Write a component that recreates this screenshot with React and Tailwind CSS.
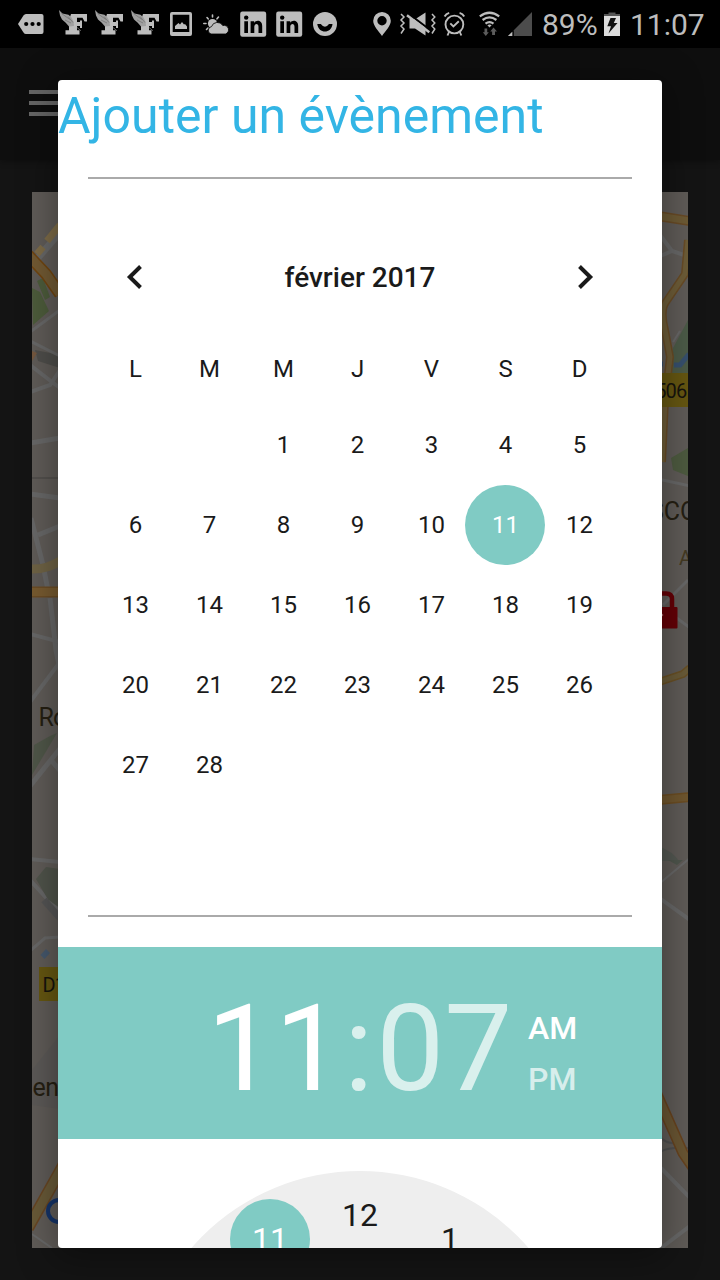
import React from "react";

function Icon({ box, w, h, className = "", children }) {
  return (
    <svg viewBox={box} width={w} height={h} className={"shrink-0 " + className}>
      {children}
    </svg>
  );
}

const GREY = "#bdbdbd";

function MessageIcon({ className }) {
  return (
    <Icon box="17 12 28 24" w={28} h={24} className={className}>
      <path d="M18 24 L23.5 15.5 Q24.5 14 26 14 H41.5 Q43.5 14 43.5 16 V32 Q43.5 34 41.5 34 H26 Q24.5 34 23.5 32.5 Z" fill={GREY} />
      <circle cx="26.2" cy="24" r="2.1" />
      <circle cx="32.5" cy="24" r="2.1" />
      <circle cx="38.7" cy="24" r="2.1" />
    </Icon>
  );
}

function WingedFIcon({ className }) {
  return (
    <Icon box="58 9 30 28" w={30} h={28} className={className}>
      <path d="M71 14 H87 V21.5 H84.5 L82.5 17.8 H77 V22 H80 V20.5 H82 V28 H80 V26 H77 V30.3 H79.5 V34.5 H65.5 V30.3 H69 V20 Z" fill={GREY} />
      <path d="M59 10 L62.5 13.5 L68.5 14.8 L71.5 17.5 L73.5 21.5 L74 26 L69 26.5 L65.5 22.5 L62 19.5 L60 15.5 Z" fill="#a0a0a0" />
      <path d="M61.5 13.5 L70 19.5 M65 20 L71 23 M68 16.5 L73 22.5" stroke="#6e6e6e" strokeWidth="0.7" fill="none" />
      <path d="M77 27.5 L81 30.8" stroke="#777" strokeWidth="0.8" />
    </Icon>
  );
}

function ImageIcon({ className }) {
  return (
    <Icon box="169 11 24 26" w={24} h={26} className={className}>
      <path fillRule="evenodd" d="M172 12 H190 Q192 12 192 14 V34 Q192 36 190 36 H172 Q170 36 170 34 V14 Q170 12 172 12 Z M172.7 14.7 V32 H189.3 V14.7 Z" fill={GREY} />
      <path d="M175 29 V26 L178.5 23 L180 24.5 L182 22 L184 24.5 L185 24 L187 26.5 V29 Z" fill={GREY} />
    </Icon>
  );
}

function WeatherIcon({ className }) {
  return (
    <Icon box="203 13 27 22" w={27} h={22} className={className}>
      <circle cx="212.5" cy="23.5" r="4.6" fill={GREY} />
      <path d="M212.5 15 V17 M207 17.5 L208.3 19 M218.5 17 L217 18.8 M203.8 23.5 H206 M206.5 29.5 L208 28" stroke={GREY} strokeWidth="1.6" strokeLinecap="round" />
      <path d="M211 34 A3.8 3.8 0 0 1 211.5 26.6 A6.2 6.2 0 0 1 222.8 25.6 A4.3 4.3 0 1 1 225.5 34 Z" fill={GREY} stroke="#000" strokeWidth="0.8" />
    </Icon>
  );
}

function LinkedInIcon({ className }) {
  return (
    <Icon box="240 11 27 27" w={27} h={27} className={className}>
      <rect x="240.2" y="11.5" width="26" height="25.3" rx="2.2" fill={GREY} />
      <circle cx="246.2" cy="17.6" r="2.2" />
      <path d="M244.3 21.2 H248 V33 H244.3 Z M250.6 21.2 H254.2 V22.8 C256.4 19.5 262.2 20.2 262.2 26 V33 H258.5 V26.8 C258.5 22.9 254.3 23.4 254.3 26.8 V33 H250.6 Z" />
    </Icon>
  );
}

function SmileIcon({ className }) {
  return (
    <Icon box="313 12 24 24" w={24} h={24} className={className}>
      <circle cx="325" cy="24" r="12" fill={GREY} />
      <path d="M317.3 24 H320.8 Q325 29.5 329 24 H332.5 C331.5 34 318.4 34 317.3 24 Z" />
    </Icon>
  );
}

function PinIcon({ className }) {
  return (
    <Icon box="373 12 18 24" w={18} h={24} className={className}>
      <path fillRule="evenodd" d="M382 12 A8.8 8.8 0 0 1 390.8 20.8 C390.8 26 385.5 31 382 36 C378.5 31 373.2 26 373.2 20.8 A8.8 8.8 0 0 1 382 12 Z M382 16 A4.7 4.7 0 1 0 382 25.4 A4.7 4.7 0 1 0 382 16 Z" fill={GREY} />
    </Icon>
  );
}

function MuteVibrateIcon({ className }) {
  return (
    <Icon box="399 11 38 26" w={38} h={26} className={className}>
      <path d="M401 14 L404 17 L401 20 L404 23 L401 26 L404 29 L401 33.5 M432 14 L434.8 17 L432 20 L434.8 23 L432 26 L434.8 29 L432 33.5" stroke={GREY} strokeWidth="1.5" fill="none" />
      <path d="M409.5 19 H415.5 L425.5 12.5 V35.5 L415 28.5 H409.5 Z" fill={GREY} />
      <path d="M408.5 13.6 L431.5 31" stroke="#000" strokeWidth="2" />
      <path d="M407 15.3 L429.3 32.2" stroke={GREY} strokeWidth="2.4" />
    </Icon>
  );
}

function AlarmIcon({ className }) {
  return (
    <Icon box="443 11 24 26" w={24} h={26} className={className}>
      <g fill="none" stroke={GREY} strokeWidth="1.9">
        <circle cx="454.4" cy="24.5" r="8.9" />
        <path d="M444.6 16.5 Q446 13.6 449.2 12.8 M464.2 16.5 Q462.8 13.6 459.6 12.8 M449 32 L447.5 35.5 M459.8 32 L461.3 35.5 M450.3 23.3 L453.4 26.5 L458.8 21.3" />
      </g>
    </Icon>
  );
}

function WifiIcon({ className }) {
  return (
    <Icon box="479 11 21 26" w={21} h={26} className={className}>
      <g fill="none" stroke={GREY} strokeWidth="2.2">
        <path d="M479.8 16.3 Q489.5 9.2 499.2 16.3 M482.6 20 Q489.5 14.8 496.4 20 M485.5 23.7 Q489.5 20.4 493.5 23.7" />
      </g>
      <path d="M487.4 25.3 Q489.5 23.7 491.6 25.3 L489.5 27.6 Z" fill={GREY} />
      <path d="M485.8 36 L482.8 32.3 H484.5 V28.5 H487.2 V32.3 H488.8 Z M493.5 27.5 L497 31.5 H495 V35 H492.1 V31.5 H490.3 Z" fill="#5c5c5c" />
    </Icon>
  );
}

function SignalIcon({ className }) {
  return (
    <Icon box="508 12 24 24" w={24} h={24} className={className}>
      <path d="M532 12 V36 H508 Z" fill="#4c4c4c" />
      <path d="M513 30.5 V36" stroke="#000" strokeWidth="1.6" />
      <path d="M512.3 31.7 V36 H508 Z" fill={GREY} />
    </Icon>
  );
}

function BatteryIcon({ className }) {
  return (
    <Icon box="604 12 16 24" w={16} h={24} className={className}>
      <path d="M604 14 H608.5 V12.5 H615.5 V14 H620 V17 H604 Z" fill="#555" />
      <path d="M604 16 H620 V36 H604 Z" fill="#dcdcdc" />
      <path d="M610.5 18 H616 L613.8 23 H617.5 L608.5 33.5 L611 26.3 H607.3 Z" fill="#111" />
    </Icon>
  );
}

function StatusBar() {
  return (
    <header className="flex h-12 shrink-0 items-center bg-black text-[30px] leading-none text-[#bdbdbd]">
      <MessageIcon className="ml-[17px]" />
      <WingedFIcon className="-mt-0.5 ml-[13px]" />
      <WingedFIcon className="-mt-0.5 ml-[6px]" />
      <WingedFIcon className="-mt-0.5 ml-[6px]" />
      <ImageIcon className="ml-[9px]" />
      <WeatherIcon className="ml-[10px]" />
      <LinkedInIcon className="ml-[10px]" />
      <LinkedInIcon className="ml-[9px]" />
      <SmileIcon className="ml-[10px]" />
      <PinIcon className="ml-[36px]" />
      <MuteVibrateIcon className="ml-[8px]" />
      <AlarmIcon className="ml-[6px]" />
      <WifiIcon className="ml-[12px]" />
      <SignalIcon className="ml-[8px]" />
      <span className="ml-[10px] w-[62px] pt-px whitespace-nowrap">89%</span>
      <BatteryIcon />
      <span className="ml-[10px] pt-px whitespace-nowrap">11:07</span>
    </header>
  );
}

function Road({ d, color = "#69655a", edge, w = 6 }) {
  return (
    <>
      {edge && <path d={d} stroke={edge} strokeWidth={w + 3} fill="none" />}
      <path d={d} stroke={color} strokeWidth={w} fill="none" />
    </>
  );
}

function CityMap() {
  const street = "#686868";
  return (
    <svg viewBox="32 192 656 1056" className="block h-full w-full" fontFamily="Roboto, sans-serif">
      <rect x="32" y="192" width="656" height="1056" fill="#605c58" />

      <path d="M32 288 L40 292 L49 311 L33 325 Z" fill="#4d5c3b" />
      <path d="M37 281 L43 278 L50 297 L45 300 Z" fill="#4d5c3b" />
      <path d="M35 350 L60 355 V368 L38 361 Z" fill="#4f4e4b" />
      <path d="M32 351 L37 353 L32 361 Z" fill="#75583f" />
      <Road d="M30 267 L62 230" color={street} w={7} />
      <path d="M37 254 L43 247 M47 241 L60 225" stroke="#7e6c48" strokeWidth="7" />
      <Road d="M28 255 L46 274 L60 294" color="#725a33" edge="#704510" w={9} />
      <Road d="M30 332 L60 310" color={street} w={3} />
      <Road d="M30 341 L60 356" color={street} w={3} />
      <Road d="M30 365 L52 382 L60 388 M30 392 L50 385 L60 370" color={street} w={4} />
      <Road d="M30 443 L60 438" color={street} w={5} />
      <Road d="M30 478 H60" color="#53504d" w={2} />
      <Road d="M30 494 L60 498" color={street} w={5} />
      <Road d="M31 518 L43 565 L49 595 M50 598 L56 650 L60 670 M38 535 L60 526" color={street} w={5} />
      <Road d="M30 569 Q46 570 60 561" color="#6f6345" w={9} />
      <Road d="M30 592 H60" color="#785b30" edge="#6c4d25" w={8} />
      <Road d="M30 634 L60 642 M30 702 L60 662" color={street} w={4} />
      <path d="M34 745 L50 736 L57 733 L32 775 Z" fill="#505749" />
      <Road d="M30 786 L62 746 M51 760 L62 773" color={street} w={5} />
      <Road d="M30 859 L60 862 M30 880 L60 913" color={street} w={4} />
      <path d="M36 879 L46 867 L60 869 V908 L50 903 Z" fill="#50544b" />
      <path d="M46 900 L60 910 M30 951 L45 938 L60 937" stroke={street} strokeWidth="3" fill="none" />
      <path d="M44 900 L60 918" stroke="#555" strokeWidth="7" />
      <path d="M40.5 955 L46 949 L50 953 L44.5 959 Z" fill="#46586d" />
      <path d="M32 1070 L60 1035 V1109 L32 1105 Z" fill="#5c5957" />
      <Road d="M28 1228 L64 1164" color="#695a38" edge="#684623" w={9} />
      <path d="M32 1234 L52 1248" stroke={street} strokeWidth="2" />
      <rect x="39" y="967" width="30" height="34" fill="#665711" />
      <text x="42.5" y="992" fontSize="20" letterSpacing="-0.8" fill="#16140d">D1</text>
      <text x="38.5" y="725.5" fontSize="25" letterSpacing="-0.8" fill="#251f12">Ro</text>
      <text x="32.5" y="1096" fontSize="25" letterSpacing="-0.5" fill="#251f12">en</text>
      <circle cx="59" cy="1211" r="11" fill="none" stroke="#153469" strokeWidth="4" />

      <Road d="M658 216 L690 221" color="#6e5b35" edge="#694b26" w={7} />
      <Road d="M660 235 L672 251 L690 257 M672 251 L658 257" color={street} w={4} />
      <path d="M688 320 V374 H668 L673 348 Z" fill="#4c5b48" />
      <path d="M673 342 L680 331" stroke={street} strokeWidth="2" />
      <path d="M658 364 L663 364 M674 365 H680 L689 354" stroke="#37506e" strokeWidth="5" fill="none" />
      <Road d="M688 240 L685 274 L666 302 Q660 310 665 330 L670 357 L665 400 L662 462" color="#6e5d38" edge="#694c26" w={5} />
      <rect x="650" y="373" width="38" height="34" fill="#665711" />
      <text x="686.5" y="398" textAnchor="end" fontSize="20" letterSpacing="-0.8" fill="#16140d">506</text>
      <path d="M671 458 L688 448 V476 L673 470 Z" fill="#4e5b40" />
      <path d="M658 479 L690 486 M688 580 L663 605 M674 616 L689 627" stroke={street} strokeWidth="3" fill="none" />
      <text x="649" y="519.5" fontSize="25" fill="#251f12">SCO</text>
      <text x="679" y="565" fontSize="20" fill="#443a22">A</text>
      <path d="M652 610 V599 Q652 593.5 658 593.5 H666 Q672 593.5 672 599 V610" fill="none" stroke="#650006" strokeWidth="4.5" />
      <rect x="645" y="607" width="32.5" height="21.5" rx="1" fill="#650006" />
      <circle cx="662" cy="615" r="1.3" fill="#a05a5c" />
      <Road d="M656 683 L683 674 L690 668" color="#6a5b38" edge="#695025" w={5} />
      <Road d="M658 800 L690 797" color="#70572f" edge="#6c4d22" w={7} />
      <path d="M660 847 Q672 851 679 861 L660 861 Z" fill="#545852" />
      <path d="M668 860 H683 L677 865 Z" fill="#4f564d" />
      <path d="M659 884 L690 858" stroke={street} strokeWidth="2" />
      <Road d="M658 897 L690 920 M661 1168 L690 1198 M661 1248 L690 1226" color={street} w={4} />
      <path d="M660 1137 Q669 1146 680 1142 M660 1152 Q668 1147 688 1148" stroke="#505050" strokeWidth="2" fill="none" />
      <Road d="M656 1092 L683 1153 L694 1169" color="#6a5633" edge="#68431e" w={8} />
    </svg>
  );
}

const WEEKDAYS = ["L", "M", "M", "J", "V", "S", "D"];
const DAYS = [null, null, ...Array.from({ length: 28 }, (_, i) => i + 1)];

function Calendar() {
  return (
    <section className="flex h-[736px] shrink-0 flex-col px-10 pt-[58px] text-[#1a1a1a]">
      <div className="flex h-20 items-center justify-between px-[26px]">
        <svg width="20" height="26" viewBox="0 0 20 26" fill="none" stroke="#1a1a1a" strokeWidth="4">
          <path d="M16.5 2.5 L5.8 13 L16.5 23.5" />
        </svg>
        <h2 className="pt-[2px] text-[28px] leading-none font-medium">février 2017</h2>
        <svg width="20" height="26" viewBox="0 0 20 26" fill="none" stroke="#1a1a1a" strokeWidth="4">
          <path d="M3.5 2.5 L14.2 13 L3.5 23.5" />
        </svg>
      </div>
      <div className="mt-[15px] grid h-[72px] grid-cols-[repeat(7,74px)] text-2xl">
        {WEEKDAYS.map((d, i) => (
          <span key={i} className="flex items-center justify-center pt-px pl-px">{d}</span>
        ))}
      </div>
      <div className="mt-px grid auto-rows-[80px] grid-cols-[repeat(7,74px)] text-2xl">
        {DAYS.map((d, i) =>
          d === 11 ? (
            <span key={i} className="-mx-[3px] flex items-center justify-center rounded-full bg-[#80cbc4] pl-px text-white">{d}</span>
          ) : (
            <span key={i} className="flex items-center justify-center pl-px">{d}</span>
          )
        )}
      </div>
    </section>
  );
}

function TimeHeader() {
  return (
    <section className="mt-[30px] flex h-48 shrink-0 bg-[#80cbc4] pl-[149px] text-white">
      <div className="flex w-[321px] items-center pt-3 text-[121px] leading-none">
        <span>11</span>
        <span className="ml-px text-white/70">:</span>
        <span className="ml-[3px] text-white/70">07</span>
      </div>
      <div className="flex flex-col pt-[56px] text-[32px] leading-[51px] font-medium">
        <span>AM</span>
        <span className="text-white/70">PM</span>
      </div>
    </section>
  );
}

function ClockFace() {
  return (
    <section className="h-[109px] shrink-0 overflow-hidden pt-8">
      <svg className="mx-auto block" width="446" height="446" viewBox="0 0 446 446" fontSize="32" textAnchor="middle">
        <circle cx="223" cy="223" r="223" fill="#eee" />
        <circle cx="133" cy="68" r="40" fill="#80cbc4" />
        <text x="223" y="55" fill="#1a1a1a">12</text>
        <text x="133" y="79" fill="#fff">11</text>
        <text x="313" y="79" fill="#1a1a1a">1</text>
      </svg>
    </section>
  );
}

function EventDialog() {
  return (
    <div className="absolute top-20 left-[58px] flex h-[1168px] w-[604px] flex-col overflow-hidden rounded bg-white shadow-[0_6px_36px_4px_rgba(0,0,0,0.35)]">
      <h1 className="h-[97px] shrink-0 pt-[7px] text-[50px] leading-[59px] whitespace-nowrap text-[#33b5e5]">Ajouter un évènement</h1>
      <div className="mx-[30px] h-[2px] shrink-0 bg-[#aaa]" />
      <Calendar />
      <div className="mx-[30px] h-[2px] shrink-0 bg-[#aaa]" />
      <TimeHeader />
      <ClockFace />
    </div>
  );
}

export default function App() {
  return (
    <div className="relative flex h-[1280px] w-[720px] flex-col overflow-hidden bg-[#141414] font-[Roboto,sans-serif]">
      <StatusBar />
      <div className="flex h-28 shrink-0 flex-col gap-[7px] bg-[#0e0e0e] pt-[42px] pl-[29px] shadow-[0_2px_6px_rgba(0,0,0,0.3)]">
        <span className="h-1 w-9 bg-[#666]" />
        <span className="h-1 w-9 bg-[#666]" />
        <span className="h-1 w-9 bg-[#666]" />
      </div>
      <main className="h-[1120px] p-8">
        <CityMap />
      </main>
      <EventDialog />
    </div>
  );
}
